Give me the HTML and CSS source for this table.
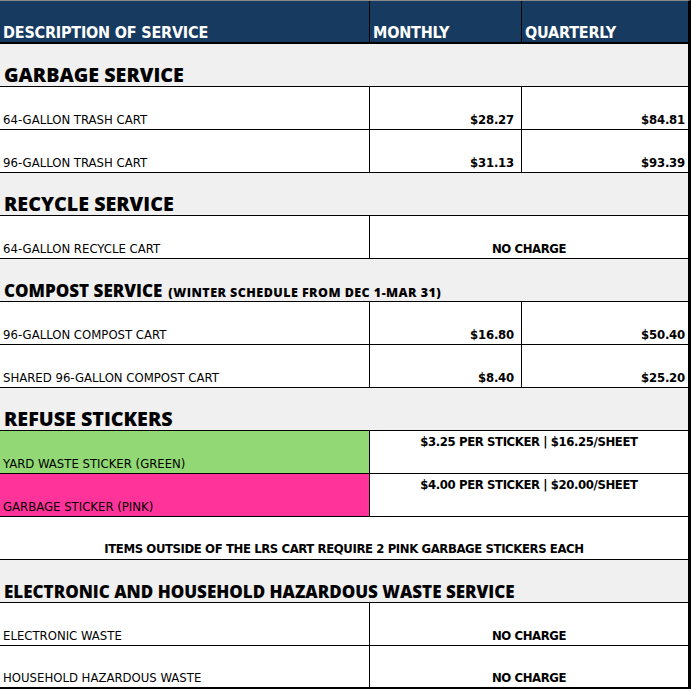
FILE: index.html
```html
<!DOCTYPE html>
<html lang="en">
<head>
<meta charset="utf-8">
<title>Service Rates</title>
<link rel="stylesheet" href="styles.css">
</head>
<body>
<div class="sheet">
  <div class="row head">
    <div class="c c1">DESCRIPTION OF SERVICE</div>
    <div class="c c2">MONTHLY</div>
    <div class="c c3">QUARTERLY</div>
  </div>

  <div class="row title"><div class="c full t-lg">GARBAGE SERVICE</div></div>
  <div class="row">
    <div class="c c1">64-GALLON TRASH CART</div>
    <div class="c c2 price">$28.27</div>
    <div class="c c3 price">$84.81</div>
  </div>
  <div class="row">
    <div class="c c1">96-GALLON TRASH CART</div>
    <div class="c c2 price">$31.13</div>
    <div class="c c3 price">$93.39</div>
  </div>

  <div class="row title"><div class="c full t-lg">RECYCLE SERVICE</div></div>
  <div class="row">
    <div class="c c1">64-GALLON RECYCLE CART</div>
    <div class="c c23 center">NO CHARGE</div>
  </div>

  <div class="row title"><div class="c full t-md">COMPOST SERVICE <span class="t-sm">(WINTER SCHEDULE FROM DEC 1-MAR 31)</span></div></div>
  <div class="row">
    <div class="c c1">96-GALLON COMPOST CART</div>
    <div class="c c2 price">$16.80</div>
    <div class="c c3 price">$50.40</div>
  </div>
  <div class="row">
    <div class="c c1">SHARED 96-GALLON COMPOST CART</div>
    <div class="c c2 price">$8.40</div>
    <div class="c c3 price">$25.20</div>
  </div>

  <div class="row title"><div class="c full t-lg">REFUSE STICKERS</div></div>
  <div class="row">
    <div class="c c1 green">YARD WASTE STICKER (GREEN)</div>
    <div class="c c23 center top">$3.25 PER STICKER | $16.25/SHEET</div>
  </div>
  <div class="row">
    <div class="c c1 pink">GARBAGE STICKER (PINK)</div>
    <div class="c c23 center top">$4.00 PER STICKER | $20.00/SHEET</div>
  </div>
  <div class="row">
    <div class="c full center note">ITEMS OUTSIDE OF THE LRS CART REQUIRE 2 PINK GARBAGE STICKERS EACH</div>
  </div>

  <div class="row title"><div class="c full t-md">ELECTRONIC AND HOUSEHOLD HAZARDOUS WASTE SERVICE</div></div>
  <div class="row">
    <div class="c c1">ELECTRONIC WASTE</div>
    <div class="c c23 center">NO CHARGE</div>
  </div>
  <div class="row last">
    <div class="c c1">HOUSEHOLD HAZARDOUS WASTE</div>
    <div class="c c23 center">NO CHARGE</div>
  </div>
</div>
</body>
</html>
```

FILE: styles.css
```css
html, body {
  margin: 0;
  padding: 0;
  background: #ffffff;
}

body {
  font-family: "DejaVu Sans Condensed", "Liberation Sans", sans-serif;
  font-stretch: condensed;
  color: #000;
}

.sheet {
  width: 688px;
  border-top: 1px solid #8a8a8a;
  border-right: 3px solid #000;
}

.row {
  display: flex;
  height: 42px;
  border-bottom: 1px solid #000;
  background: #fff;
}

.row.last {
  border-bottom-width: 2px;
  height: 41px;
}

.c {
  display: flex;
  align-items: flex-end;
  box-sizing: border-box;
  font-size: 13px;
  line-height: 15px;
  padding: 0 3px 2px 3px;
  white-space: nowrap;
}

.c1 {
  width: 370px;
  border-right: 1px solid #000;
}

.c2 {
  width: 152px;
  border-right: 1px solid #000;
}

.c3 {
  width: 166px;
}

.c23 {
  width: 318px;
}

.full {
  width: 688px;
}

.price {
  justify-content: flex-end;
  font-weight: bold;
  letter-spacing: -0.2px;
}

.c2.price {
  padding-right: 7px;
}

.center {
  justify-content: center;
  font-weight: bold;
  letter-spacing: -0.4px;
}

.top {
  align-items: flex-start;
  padding-top: 3px;
}

.head {
  height: 41px;
  background: #173b60;
  border-bottom: 2px solid #000;
}

.head .c {
  color: #fff;
  font-weight: bold;
  font-size: 16px;
  line-height: 18px;
  padding-bottom: 0;
  letter-spacing: -0.2px;
}

.title {
  background: #f0f0f0;
}

.title .c {
  font-family: "Open Sans", Lato, "DejaVu Sans", sans-serif;
  font-stretch: normal;
  font-weight: 800;
  padding-left: 4px;
  padding-bottom: 0;
}

.t-lg {
  font-size: 19.7px;
  line-height: 22px;
}

.title .t-md {
  font-size: 17px;
  line-height: 20px;
  gap: 6px;
  padding-bottom: 0;
}

.t-sm {
  font-size: 12.5px;
  line-height: 17px;
  letter-spacing: 0.45px;
}

.green {
  background: #92d975;
}

.pink {
  background: #ff3399;
}

.note {
  padding-bottom: 3px;
}
```
